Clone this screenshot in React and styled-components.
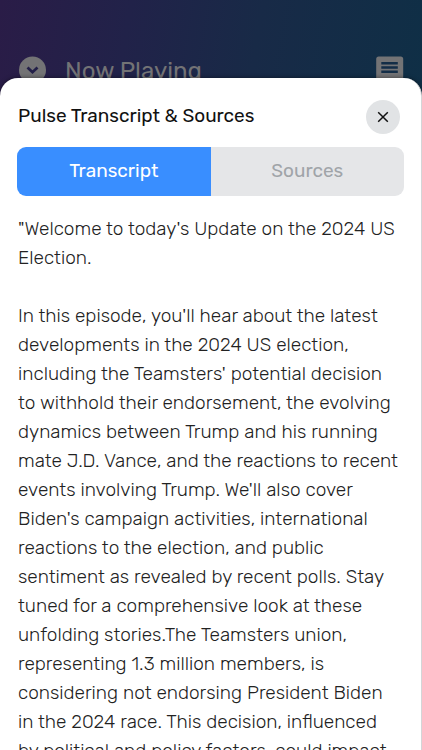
import { useState } from "react";
import styled, { createGlobalStyle } from "styled-components";

const GlobalStyle = createGlobalStyle`
  * {
    box-sizing: border-box;
  }
  body {
    margin: 0;
    font-family: Rubik, Roboto, sans-serif;
  }
`;

const Page = styled.div`
  height: 100vh;
  display: flex;
  flex-direction: column;
  overflow: hidden;
  background: #182a47;
`;

const Backdrop = styled.div`
  flex: none;
  height: 100px;
  background: linear-gradient(100deg, #2a1c47 0%, #212249 30%, #182a47 60%, #0f2f46 100%);
`;

const PlayerHeader = styled.header`
  display: flex;
  align-items: flex-start;
  padding: 56px 18px 0;
`;

const HeaderButton = styled.button`
  flex: none;
  width: 28px;
  height: 28px;
  padding: 0;
  border: 0;
  background: none;

  svg {
    display: block;
  }
`;

const PlayerTitle = styled.h1`
  flex: 1;
  margin: 0 0 0 19px;
  color: #737375;
  font-size: 24px;
  font-weight: 400;
  line-height: 30px;
`;

// overlaps the backdrop so its colour shows behind the rounded corners
const Sheet = styled.section`
  position: relative;
  flex: 1;
  min-height: 0;
  display: flex;
  flex-direction: column;
  margin-top: -22px;
  border-right: 1px solid #d4d5d7;
  border-radius: 18px 18px 0 0;
  background: #fff;
  box-shadow: 0 0 4px rgba(0, 0, 0, 0.5);
`;

const SheetHeader = styled.div`
  display: flex;
  align-items: center;
  justify-content: space-between;
  padding: 22px 21px 13px 18px;
`;

const SheetTitle = styled.h2`
  margin: 0;
  padding-bottom: 2px;
  color: #111;
  font-size: 19px;
  font-weight: 400;
  line-height: 24px;
`;

const CloseButton = styled.button`
  display: grid;
  place-items: center;
  width: 34px;
  height: 34px;
  padding: 0;
  border: 0;
  border-radius: 50%;
  background: #e1e3e5;
`;

const Tabs = styled.div`
  flex: none;
  display: grid;
  grid-template-columns: 1fr 1fr;
  height: 49px;
  margin: 0 17px;
  border-radius: 9px;
  overflow: hidden;
`;

const Tab = styled.button`
  padding: 0 0 3px;
  border: 0;
  background: ${({ $active }) => ($active ? "#398eff" : "#e5e6e8")};
  color: ${({ $active }) => ($active ? "#fff" : "#a0a4a8")};
  font-family: inherit;
  font-size: 19px;
  font-weight: 400;
`;

const Transcript = styled.div`
  flex: 1;
  min-height: 0;
  padding: 18px 22px 0 18px;
  overflow-y: auto;
  scrollbar-width: none;
  color: #222;
  font-size: 19px;
  font-weight: 300;
  line-height: 29px;
`;

const Paragraph = styled.p`
  margin: 0 0 29px;
`;

const paragraphs = [
  `"Welcome to today's Update on the 2024 US Election.`,
  "In this episode, you'll hear about the latest developments in the 2024 US election, " +
    "including the Teamsters' potential decision to withhold their endorsement, the evolving " +
    "dynamics between Trump and his running mate J.D. Vance, and the reactions to recent " +
    "events involving Trump. We'll also cover Biden's campaign activities, international " +
    "reactions to the election, and public sentiment as revealed by recent polls. Stay " +
    "tuned for a comprehensive look at these unfolding stories.The Teamsters union, " +
    "representing 1.3 million members, is considering not endorsing President Biden " +
    "in the 2024 race. This decision, influenced by political and policy factors, could impact",
];

function App() {
  const [tab, setTab] = useState("transcript");

  return (
    <Page>
      <GlobalStyle />
      <Backdrop>
        <PlayerHeader>
          <HeaderButton aria-label="Minimize player">
            <svg width="28" height="28" viewBox="0 0 28 28">
              <circle cx="14.5" cy="14" r="13.5" fill="#737375" />
              <path d="M9.500 11.500l5 4.700 5-4.700" fill="none" stroke="#221f48" strokeWidth="2.800" />
            </svg>
          </HeaderButton>
          <PlayerTitle>Now Playing</PlayerTitle>
          <HeaderButton aria-label="Show transcript">
            <svg width="28" height="28" viewBox="0 0 28 28">
              <path
                d="M2.700 .5h22a2.500 2.500 0 0 1 2.500 2.500v25H.2V3A2.500 2.500 0 0 1 2.700 .5z"
                fill="#737375"
              />
              <path
                d="M5.300 7.300h16.500M5.300 11.500h16.500M5.300 15.700h16.500"
                stroke="#132d47"
                strokeWidth="2.600"
              />
            </svg>
          </HeaderButton>
        </PlayerHeader>
      </Backdrop>
      <Sheet>
        <SheetHeader>
          <SheetTitle>Pulse Transcript &amp; Sources</SheetTitle>
          <CloseButton aria-label="Close">
            <svg width="12" height="12" viewBox="0 0 12 12">
              <path d="M1.200 1.200l9.600 9.600M10.800 1.200l-9.600 9.600" stroke="#111" strokeWidth="1.500" />
            </svg>
          </CloseButton>
        </SheetHeader>
        <Tabs role="tablist">
          <Tab
            role="tab"
            aria-selected={tab === "transcript"}
            $active={tab === "transcript"}
            onClick={() => setTab("transcript")}
          >
            Transcript
          </Tab>
          <Tab
            role="tab"
            aria-selected={tab === "sources"}
            $active={tab === "sources"}
            onClick={() => setTab("sources")}
          >
            Sources
          </Tab>
        </Tabs>
        {tab === "transcript" && (
          <Transcript role="tabpanel">
            {paragraphs.map((text, index) => (
              <Paragraph key={index}>{text}</Paragraph>
            ))}
          </Transcript>
        )}
      </Sheet>
    </Page>
  );
}

export default App;
